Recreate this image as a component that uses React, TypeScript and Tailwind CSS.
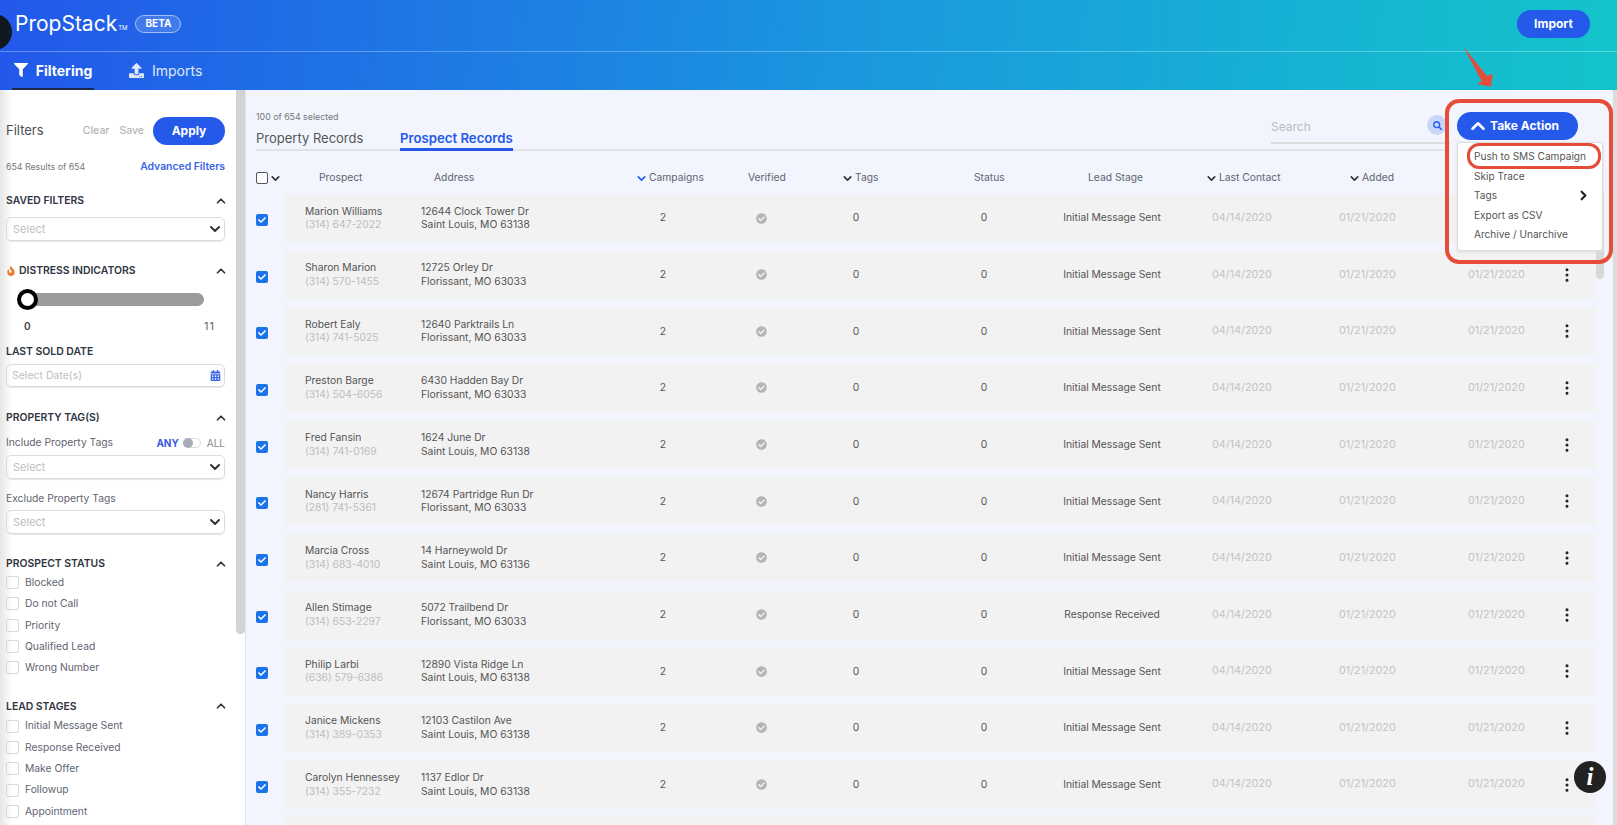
import { ChevronDown, ChevronUp, ChevronRight, EllipsisVertical } from 'lucide-react';
import { FaFilter, FaUpload, FaFire, FaCalendarAlt, FaCheckCircle, FaSearch, FaCheck } from 'react-icons/fa';

const rows = [
  ['Marion Williams', '(314) 647-2022', '12644 Clock Tower Dr', 'Saint Louis, MO 63138', 'Initial Message Sent'],
  ['Sharon Marion', '(314) 570-1455', '12725 Orley Dr', 'Florissant, MO 63033', 'Initial Message Sent'],
  ['Robert Ealy', '(314) 741-5025', '12640 Parktrails Ln', 'Florissant, MO 63033', 'Initial Message Sent'],
  ['Preston Barge', '(314) 504-6056', '6430 Hadden Bay Dr', 'Florissant, MO 63033', 'Initial Message Sent'],
  ['Fred Fansin', '(314) 741-0169', '1624 June Dr', 'Saint Louis, MO 63138', 'Initial Message Sent'],
  ['Nancy Harris', '(281) 741-5361', '12674 Partridge Run Dr', 'Florissant, MO 63033', 'Initial Message Sent'],
  ['Marcia Cross', '(314) 683-4010', '14 Harneywold Dr', 'Saint Louis, MO 63136', 'Initial Message Sent'],
  ['Allen Stimage', '(314) 653-2297', '5072 Trailbend Dr', 'Florissant, MO 63033', 'Response Received'],
  ['Philip Larbi', '(636) 579-6386', '12890 Vista Ridge Ln', 'Saint Louis, MO 63138', 'Initial Message Sent'],
  ['Janice Mickens', '(314) 389-0353', '12103 Castilon Ave', 'Saint Louis, MO 63138', 'Initial Message Sent'],
  ['Carolyn Hennessey', '(314) 355-7232', '1137 Edlor Dr', 'Saint Louis, MO 63138', 'Initial Message Sent'],
];

function SectionTitle({ children }: { children: React.ReactNode }) {
  return (
    <div className="-mb-[2px] flex h-[18px] items-center justify-between text-[10.4px] font-semibold text-[#2f3542]">
      <div className="flex items-center gap-[3px]">{children}</div>
      <ChevronUp size={14} strokeWidth={3} className="-mr-[3px] text-[#333]" />
    </div>
  );
}

function SelectBox({ className }: { className: string }) {
  return (
    <div className={`flex h-6 items-center justify-between rounded-[5px] border border-[#dcdcdc] pl-[6px] pr-[1px] text-[11px] text-[#bdbdbd] shadow-[0_1px_1px_#e5e5e5] ${className}`}>
      Select
      <ChevronDown size={16} strokeWidth={3} className="text-[#333]" />
    </div>
  );
}

function CheckItem({ label }: { label: string }) {
  return (
    <div className="flex h-[21.3px] items-center gap-[6px] text-[10.3px] text-[#5f6470]">
      <span className="h-[13px] w-[13px] rounded-[2px] border border-[#d8d8d8]" />
      {label}
    </div>
  );
}

function Sidebar() {
  return (
    <aside className="w-[236px] shrink-0 bg-[linear-gradient(90deg,#e6e6e6,#ffffff_12px)] pl-[6px] pr-[11px] pt-[27px]">
      <div className="flex h-7 items-center">
        <span className="text-[13px] text-[#4a4f5a]">Filters</span>
        <span className="ml-auto text-[10.5px] font-medium text-[#b5b5b5]">Clear</span>
        <span className="ml-[10px] text-[10.5px] font-medium text-[#b5b5b5]">Save</span>
        <span className="ml-[9px] flex h-7 w-[72px] items-center justify-center rounded-full bg-[#2459ea] text-[12px] font-bold text-white">Apply</span>
      </div>
      <div className="mt-[14px] flex h-4 items-center justify-between">
        <span className="text-[8.8px] text-[#777]">654 Results of 654</span>
        <span className="text-[10.4px] font-semibold text-[#3b66e8]">Advanced Filters</span>
      </div>
      <div className="mt-[17px]"><SectionTitle>SAVED FILTERS</SectionTitle></div>
      <SelectBox className="mt-[9px]" />
      <div className="mt-[21px]">
        <SectionTitle><FaFire size={10} className="text-[#ee7b30]" />DISTRESS INDICATORS</SectionTitle>
      </div>
      <div className="relative ml-[16px] mt-[15px] h-[13px] w-[182px] rounded-full bg-[#9b9b9b]">
        <span className="absolute left-[-5px] top-[-4px] h-[21px] w-[21px] rounded-full border-[4px] border-black bg-white" />
      </div>
      <div className="ml-[18px] mt-[13px] flex h-[14px] w-[191px] items-center justify-between text-[10px] text-[#444]">
        <span className="font-semibold">0</span>
        <span className="text-[11px] tracking-[1px] text-[#666]">11</span>
      </div>
      <div className="mt-[10px] flex h-[18px] items-center text-[10.4px] font-semibold text-[#2f3542]">LAST SOLD DATE</div>
      <div className="mt-[3px] flex h-[23px] items-center justify-between rounded-[5px] border border-[#dcdcdc] pl-[5px] pr-[3px] text-[10.5px] text-[#bdbdbd] shadow-[0_1px_1px_#e5e5e5]">
        Select Date(s)
        <FaCalendarAlt size={11} className="text-[#3b66e8]" />
      </div>
      <div className="mt-[22px]"><SectionTitle>PROPERTY TAG(S)</SectionTitle></div>
      <div className="mt-[9px] flex h-[18px] items-center text-[10.3px] text-[#5f6470]">
        Include Property Tags
        <span className="ml-auto text-[10px] font-bold text-[#3b59e0]">ANY</span>
        <span className="relative ml-[4px] h-[10px] w-[18px] rounded-full border border-[#ddd]">
          <span className="absolute left-[-1px] top-[-1px] h-[10px] w-[10px] rounded-full bg-[#a9adb5]" />
        </span>
        <span className="ml-[6px] text-[10px] text-[#888]">ALL</span>
      </div>
      <SelectBox className="mt-[3px]" />
      <div className="mt-[11px] flex h-[18px] items-center text-[10.3px] text-[#5f6470]">Exclude Property Tags</div>
      <SelectBox className="mt-[2px]" />
      <div className="mt-[21px]"><SectionTitle>PROSPECT STATUS</SectionTitle></div>
      <div className="mt-[1px]">
        {['Blocked', 'Do not Call', 'Priority', 'Qualified Lead', 'Wrong Number'].map((l) => <CheckItem key={l} label={l} />)}
      </div>
      <div className="mt-[19px]"><SectionTitle>LEAD STAGES</SectionTitle></div>
      <div className="mt-[2px]">
        {['Initial Message Sent', 'Response Received', 'Make Offer', 'Followup', 'Appointment'].map((l) => <CheckItem key={l} label={l} />)}
      </div>
    </aside>
  );
}

function TableHead() {
  const arrow = <ChevronDown size={13} strokeWidth={3} className="-ml-[2px] mr-[1px] text-[#333]" />;
  return (
    <div className="mt-[15px] flex h-6 items-center text-[10.3px] text-[#5f6470]">
      <span className="h-[12px] w-[12px] rounded-[2px] border border-[#555] bg-white" />
      <ChevronDown size={13} strokeWidth={3} className="ml-[1px] -mr-[2px] text-[#333]" />
      <span className="ml-[39px] w-[115px]">Prospect</span>
      <span className="w-[203px]">Address</span>
      <span className="flex w-[111px] items-center">
        <ChevronDown size={13} strokeWidth={3} className="-ml-[2px] mr-[1px] text-[#2459ea]" />
        Campaigns
      </span>
      <span className="w-[95px]">Verified</span>
      <span className="flex w-[131px] items-center">{arrow}Tags</span>
      <span className="w-[114px]">Status</span>
      <span className="w-[119px]">Lead Stage</span>
      <span className="flex w-[143px] items-center">{arrow}Last Contact</span>
      <span className="flex items-center">{arrow}Added</span>
    </div>
  );
}

function Row({ r }: { r: string[] }) {
  return (
    <div className="mb-[8.67px] flex h-12 items-center">
      <span className="mt-1 flex h-[12px] w-[12px] items-center justify-center rounded-[2px] bg-[#1a73e8] text-white">
        <FaCheck size={8} />
      </span>
      <div className="ml-4 flex h-12 flex-1 items-center bg-[#f2f2f2] pl-[21px] text-[10.3px] text-[#555]">
        <div className="w-[116px] leading-[13.5px]">
          <div>{r[0]}</div>
          <div className="text-[#bdbdbd]">{r[1]}</div>
        </div>
        <div className="w-[192px] leading-[13.5px]">
          <div>{r[2]}</div>
          <div>{r[3]}</div>
        </div>
        <div className="w-[100px] text-center">2</div>
        <div className="flex w-[96px] justify-center"><FaCheckCircle size={11} className="text-[#b5b5b5]" /></div>
        <div className="w-[94px] text-center">0</div>
        <div className="ml-[41px] w-[80px] text-center">0</div>
        <div className="ml-[18px] w-[140px] text-center">{r[4]}</div>
        <div className="ml-[30px] w-[127px] text-[10.8px] text-[#c4c4c4]">04/14/2020</div>
        <div className="w-[129px] text-[10.8px] text-[#c4c4c4]">01/21/2020</div>
        <div className="w-[90px] text-[10.8px] text-[#c4c4c4]">01/21/2020</div>
        <EllipsisVertical size={18} strokeWidth={2} className="text-[#222]" />
      </div>
    </div>
  );
}

export default function App() {
  return (
    <div className="relative h-[825px] w-full overflow-hidden bg-white font-[Inter,sans-serif]">
      <header className="h-[90px] bg-[linear-gradient(95deg,#2258ea_0%,#1a9ade_55%,#13c4cb_100%)] text-white">
        <div className="flex h-[52px] items-center border-b border-white/30 pb-[4px] pl-[15px] pr-[27px]">
          <span className="text-[21px] leading-none">PropStack</span>
          <span className="ml-[1px] mt-[8px] text-[6px]">TM</span>
          <span className="ml-2 flex h-[18px] w-[46px] items-center justify-center rounded-full border border-white/50 bg-white/15 text-[10px] font-bold">BETA</span>
          <span className="ml-auto flex h-7 w-[73px] items-center justify-center rounded-full bg-[#2459ea] text-[12px] font-bold">Import</span>
        </div>
        <nav className="flex h-[38px] pl-[12px]">
          <div className="flex w-[82px] items-center justify-center gap-[8px] border-b-2 border-[#1c2a4a] text-[14px] font-bold">
            <FaFilter size={14} />
            Filtering
          </div>
          <div className="ml-[35px] flex items-center gap-[8px] pb-[1px] text-[14px] text-white/85">
            <FaUpload size={15} />
            Imports
          </div>
        </nav>
      </header>

      <div className="flex h-[735px]">
        <Sidebar />
        <div className="flex w-[10px] shrink-0 border-r border-[#dfe3ee]">
          <div className="h-[544px] w-[9px] rounded-b-full bg-[#d3d3d3]" />
        </div>
        <main className="flex min-w-0 flex-1 bg-[#f2f5fe] pl-[10px]">
          <div className="min-w-0 flex-1">
            <div className="pt-[22px]">
              <div className="flex items-start">
                <div className="w-[1194px]">
                  <div className="h-[10px] text-[8.8px] leading-[10px] text-[#777]">100 of 654 selected</div>
                  <div className="mt-[7px] flex h-[22px] justify-between border-b-2 border-[#e0e3ea]">
                    <div className="flex h-[20px] text-[13px]">
                      <span className="w-[144px] text-[#555]">Property Records</span>
                      <span className="h-[22px] border-b-[3px] border-[#2459ea] text-[13.2px] font-semibold text-[#2459ea]">Prospect Records</span>
                    </div>
                    <div className="-mt-[9px] h-[24px] w-[179px] border-b-2 border-[#dcdcdc] text-[12px] leading-[14px] text-[#bdbdbd]">Search</div>
                  </div>
                </div>
                <div className="ml-[7px] flex h-7 w-[121px] items-center gap-[1px] rounded-full bg-[#2459ea] pl-[10px] text-[12px] font-bold text-white">
                  <ChevronUp size={22} strokeWidth={2.8} />
                  Take Action
                </div>
              </div>
              <TableHead />
            </div>
            <div className="mt-1">
              {rows.map((r, i) => <Row key={i} r={r} />)}
              <div className="ml-7 h-12 bg-[#f2f2f2]" />
            </div>
          </div>
          <div className="w-[21px] shrink-0 pt-[100px]">
            <div className="h-[89px] w-2 rounded-full bg-[#d8d8d8]" />
          </div>
        </main>
      </div>

      <span className="absolute left-[-24px] top-[14px] h-9 w-9 rounded-full bg-[#101820]" />

      <span className="absolute left-[1427px] top-[115px] flex h-5 w-5 items-center justify-center rounded-full bg-[#c7d6fb] text-[#2459ea]">
        <FaSearch size={9} />
      </span>

      <div className="absolute left-[1457px] top-[142px] h-[109px] w-[146px] rounded-[3px] border border-[#ddd] bg-white pl-[16px] pt-[4px] text-[10.1px] leading-[19.5px] text-[#555] shadow-[0_1px_3px_#ddd]">
        <div>Push to SMS Campaign</div>
        <div>Skip Trace</div>
        <div className="relative">
          Tags
          <ChevronRight size={15} strokeWidth={3.5} className="absolute right-[11px] top-[2px] text-[#222]" />
        </div>
        <div>Export as CSV</div>
        <div>Archive / Unarchive</div>
      </div>

      {/* red annotations sit on top of the screenshot */}
      <div className="pointer-events-none absolute left-[1445px] top-[99px] h-[165px] w-[168px] rounded-[14px] border-[4px] border-[#e64c37]" />
      <div className="pointer-events-none absolute left-[1467px] top-[143px] h-[26px] w-[134px] rounded-[12px] border-[3px] border-[#e64c37]" />
      <svg className="pointer-events-none absolute left-[1460px] top-[44px]" width="36" height="46" viewBox="0 0 36 46">
        <polygon points="3.3,2.7 27,32 33,30 30.7,42.7 17.3,40 21.7,37" fill="#e64c37" />
      </svg>

      <div className="absolute left-[1574px] top-[761px] flex h-8 w-8 items-center justify-center rounded-full bg-[#222] font-['Liberation_Serif',serif] text-[25px] font-bold italic text-white">i</div>
      <div className="absolute bottom-0 right-0 top-[90px] w-1 bg-[#dcdcdc]" />
    </div>
  );
}
